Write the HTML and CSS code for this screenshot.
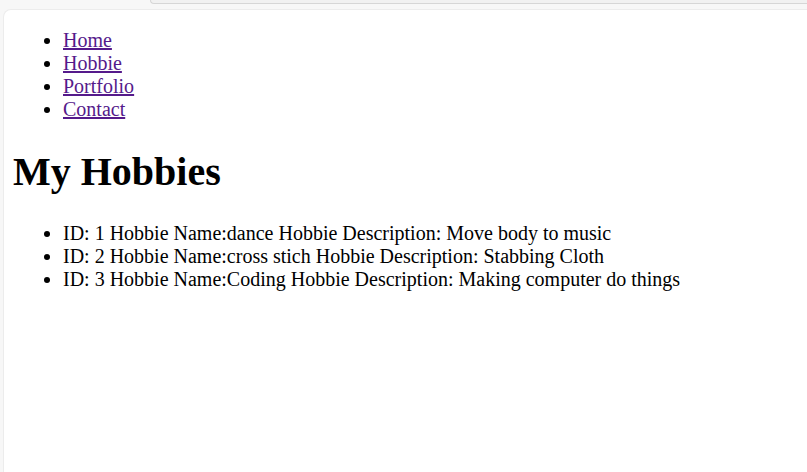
FILE: index.html
```html
<!DOCTYPE html>
<html>
<head>
<meta charset="utf-8">
<link rel="stylesheet" href="styles.css">
</head>
<body>
<div class="chrome">
  <div class="bar"></div>
</div>
<div class="panel">
  <ul class="nav">
    <li><a href="#">Home</a></li>
    <li><a href="#">Hobbie</a></li>
    <li><a href="#">Portfolio</a></li>
    <li><a href="#">Contact</a></li>
  </ul>
  <h1>My Hobbies</h1>
  <ul>
    <li>ID: 1 Hobbie Name:dance Hobbie Description: Move body to music</li>
    <li>ID: 2 Hobbie Name:cross stich Hobbie Description: Stabbing Cloth</li>
    <li>ID: 3 Hobbie Name:Coding Hobbie Description: Making computer do things</li>
  </ul>
</div>
</body>
</html>
```
FILE: styles.css
```css
html, body {
  margin: 0;
  padding: 0;
  height: 100%;
  overflow: hidden;
}
body {
  background: #f7f7f7;
  display: flex;
  flex-direction: column;
  font-family: "Liberation Serif", "Times New Roman", serif;
  font-size: 20px;
  color: #000;
}
.chrome {
  height: 9px;
  flex: none;
  position: relative;
}
.bar {
  margin-left: 150px;
  height: 3px;
  border-bottom: 1px solid #d6d6d6;
  border-left: 1px solid #d6d6d6;
  border-bottom-left-radius: 8px;
  background: #f1f1f1;
}
.panel {
  flex: 1;
  margin-left: 3px;
  background: #fff;
  border-top-left-radius: 8px;
  border-top: 1px solid #ececec;
  border-left: 1px solid #ececec;
  padding: 0 10px 0 9px;
  display: flow-root;
}
ul {
  margin: 20px 0;
  padding-left: 50px;
}
.nav {
  margin-top: 19px;
}
h1 {
  font-size: 40px;
  margin: 27px 0;
  font-weight: bold;
}
a {
  color: #551a8b;
}
```
